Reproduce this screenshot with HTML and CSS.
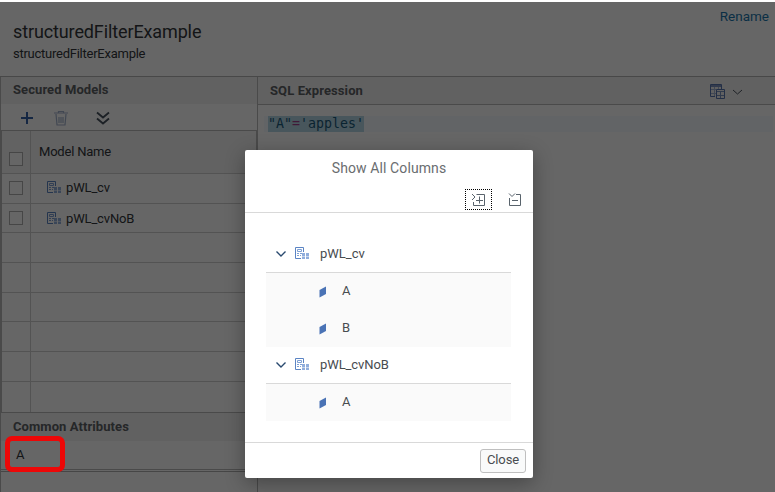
FILE: index.html
```html
<!DOCTYPE html>
<html lang="en">
<head>
<meta charset="utf-8">
<title>structuredFilterExample</title>
<link rel="stylesheet" href="styles.css">
</head>
<body>
<svg width="0" height="0" class="defs">
  <symbol id="model" viewBox="0 0 14 13">
    <path d="M6 11.500H.5V.5h8V5" fill="none" stroke="#5b84c4"/>
    <path d="M2.500 2.500h4v2h-4zM2 6.500h2m1 0h2M2 8.500h2m1 0h1" fill="none" stroke="#7d9fd3"/>
    <path d="M7 6h3v3H7zM11 6h3v3h-3zM7 9.500h3V12H7zM11 9.500h3V12h-3z" fill="#91aedc"/>
  </symbol>
  <symbol id="attr" viewBox="0 0 8 12"><path d="M.5 4 7 .5v7.500L.5 11.500z" fill="#4a73b5"/></symbol>
  <symbol id="chev" viewBox="0 0 12 8"><path d="M1.500 1.500 6 6l4.500-4.500" fill="none" stroke="currentColor" stroke-width="1.400"/></symbol>
</svg>
<div class="app">
  <header class="page-head">
    <div><h1>structuredFilterExample</h1><p>structuredFilterExample</p></div>
    <a class="rename">Rename</a>
  </header>
  <main class="panes">
    <section class="left">
      <h2 class="bar models-title">Secured Models</h2>
      <div class="tools">
        <svg class="plus" width="14" height="14"><path d="M7 1v12M1 7h12" stroke="#3562a8" stroke-width="2"/></svg>
        <svg class="trash" width="14" height="15" fill="none" stroke="#a3b2cd"><path d="M0 2h14M4.500 1.500v-1h5v1M2 3l1 11h8l1-11M5 6v6M7 6v6M9 6v6" stroke-width="1.200"/></svg>
        <svg class="expand" width="14" height="14" fill="none" stroke="#46525e" stroke-width="1.800"><path d="m1 1.500 6 5 6-5M1 7.500l6 5 6-5"/></svg>
      </div>
      <div class="table">
        <div class="row head"><span class="cell"><i class="box"></i></span><span class="name">Model Name</span></div>
        <div class="row"><span class="cell"><i class="box"></i></span><span class="item"><svg width="14" height="13"><use href="#model"/></svg><b class="m1">pWL_cv</b></span></div>
        <div class="row short"><span class="cell"><i class="box"></i></span><span class="item"><svg width="14" height="13"><use href="#model"/></svg><b class="m2">pWL_cvNoB</b></span></div>
        <div class="row"><span class="cell"></span></div>
        <div class="row"><span class="cell"></span></div>
        <div class="row short"><span class="cell"></span></div>
        <div class="row"><span class="cell"></span></div>
        <div class="row"><span class="cell"></span></div>
        <div class="row last"><span class="cell"></span></div>
      </div>
      <h2 class="bar common">Common Attributes</h2>
      <div class="attribute">A</div>
      <div class="rest"></div>
    </section>
    <section class="right">
      <div class="bar sql"><h2>SQL Expression</h2>
        <svg class="grids" width="15" height="16" fill="none" stroke="#5976b0"><path d="M5 12.500H.5V.5h11V5"/><path d="M1 2h10" stroke-width="1.500"/><path d="M4.500 3v9M8.500 3v2M1 5.500h5M1 9.500h5" stroke="#a3b5d4"/><path d="M6.500 5.500h8v9h-8z"/><path d="M7 7.500h7M10.500 8v6M7 11.500h7" stroke="#7b93c0"/></svg>
        <svg class="down" width="11" height="7"><path d="m1 1 4.500 4L10 1" fill="none" stroke="#4c5661"/></svg>
      </div>
      <div class="editor"><code><mark>"A"<em>=</em>'apples'</mark></code></div>
    </section>
  </main>
</div>
<div class="overlay"></div>
<div class="marker"></div>
<div class="dialog" role="dialog">
  <div class="dialog-head">
    <h3>Show All Columns</h3>
    <div class="actions">
      <span class="focus"><svg width="15" height="14" fill="none" stroke="#59636c"><path d="m1 1 3 3-3 3M5.500 1.500h8v11h-11V9M8.500 3.500v7M5 7.500h7"/></svg></span>
      <svg width="14" height="14" fill="none" stroke="#59636c"><path d="m1 .5 3 3 3-3M8 1.500h4.500v11h-11V5M4 7.500h6"/></svg>
    </div>
  </div>
  <div class="tree">
    <div class="parent"><svg class="chev" width="12" height="8"><use href="#chev"/></svg><svg width="14" height="13"><use href="#model"/></svg><span class="m1">pWL_cv</span></div>
    <div class="child"><svg width="8" height="12"><use href="#attr"/></svg><span>A</span></div>
    <div class="child"><svg width="8" height="12"><use href="#attr"/></svg><span>B</span></div>
    <div class="parent"><svg class="chev" width="12" height="8"><use href="#chev"/></svg><svg width="14" height="13"><use href="#model"/></svg><span class="m2">pWL_cvNoB</span></div>
    <div class="child"><svg width="8" height="12"><use href="#attr"/></svg><span>A</span></div>
  </div>
  <footer><button>Close</button></footer>
</div>
</body>
</html>
```
FILE: styles.css
```css
*{box-sizing:border-box;margin:0;padding:0}
body{width:775px;height:492px;overflow:hidden;background:#fff;font:13px Roboto,"Liberation Sans",sans-serif;color:#32363a}
svg{display:block;flex:none}
.defs{position:absolute}
.app{height:492px;padding-top:2px;display:flex;flex-direction:column}
.page-head{height:74px;display:flex;justify-content:space-between;padding:0 6px 0 13px}
h1{font-weight:400;font-size:18px;line-height:22px;margin-top:19px;letter-spacing:-.12px}
.page-head p{line-height:16px;margin-top:3px;letter-spacing:-.25px}
.rename{font-size:13.500px;line-height:16px;margin-top:6px;color:#1b76ac}
.panes{flex:1;display:flex;border-top:1px solid #b4b4b4}
.left{width:258px;border:solid #b8b8b8;border-width:0 1px;display:flex;flex-direction:column}
.right{flex:1}
.bar{background:#f2f2f2;height:27px;line-height:26px;padding-left:12px;font-size:13px;font-weight:700;color:#5d6165;letter-spacing:.08px}
.tools{height:26px;display:flex;align-items:center;padding:2px 0 0 19px}
.trash{margin-left:20px}
.expand{margin-left:28px}
.table{width:256px;border:1px solid #b8b8b8}
.row{height:30px;display:flex;border-bottom:1px solid #cfcfcf}
.row.short{height:29px}
.row.head{height:43px;background:#f4f4f4}
.row.last{height:30px;border:0}
.cell{width:29px;border-right:1px solid #cfcfcf;display:flex;align-items:center;justify-content:center}
.box{width:14px;height:14px;border:1px solid #b0b0b0;background:#fff}
.row:not(.head) .box{margin-bottom:1px}
.head .cell{align-items:flex-end;padding-bottom:7px}
.name{padding-left:8px;line-height:41px;letter-spacing:-.2px}
.item{display:flex;align-items:center;padding:0 0 2px 16px}
.short .item{padding-bottom:0}
.item b{font-weight:400;margin-left:5px;letter-spacing:-.15px}
.common{height:28px;line-height:27px}
.attribute{height:29px;line-height:27px;padding-left:15px;border-bottom:1px solid #b8b8b8}
.rest{margin-top:1px;flex:1;border-top:1px solid #b0b0b0}
.sql{height:28px;border-bottom:1px solid #b8b8b8;display:flex;align-items:center;padding-left:12px}
.sql h2{font-size:13px;line-height:26px;flex:1;letter-spacing:.1px}
.down{margin:3px 32px 0 7px}
.grids{margin:2px 0 0}
.editor{padding:11px 2px 0 6px}
.editor code{display:block;background:#f6faff;height:16px;padding-left:4px;font:13.290px/16px "DejaVu Sans Mono",monospace}
mark{display:inline-block;height:16px;background:#b4d8e7;color:#1a5a7b}
em{font-style:normal;color:#a0408c}
.overlay{position:absolute;inset:2px 0 0;background:rgba(0,0,0,.6)}
.marker{position:absolute;left:5px;top:436px;width:60px;height:36px;border:5px solid #ed0707;border-radius:7px}
.dialog{position:absolute;left:245px;top:150px;width:288px;height:328px;background:#fff;border-radius:2px;box-shadow:0 5px 20px rgba(0,0,0,.32);display:flex;flex-direction:column}
.dialog-head{height:63px;border-bottom:1px solid #d9d9d9}
h3{font-weight:400;font-size:14px;line-height:36px;text-align:center;color:#6a6d70;letter-spacing:.1px}
.actions{display:flex;justify-content:flex-end;align-items:center;padding:3px 11px 0 0;gap:16px}
.focus{width:27px;height:21px;border:1px dotted #000;display:grid;place-items:center}
.tree{flex:1;padding:22px 22px 0 21px;color:#484c50}
.parent{height:38px;border-bottom:1px solid #d9d9d9;display:flex;align-items:center;padding-left:9px}
.chev{color:#29496f;margin-right:8px}
.parent span{margin-left:11px}
.child + .parent{height:37px;padding-bottom:1px}
.m2{letter-spacing:-.1px}
.child{height:37px;display:flex;align-items:center;padding:0 0 2px 53px;background:#fafafa}
.child svg{margin-top:3px}
.child span{margin-left:15px}
footer{height:36px;border-top:1px solid #d9d9d9;display:flex;justify-content:flex-end;padding:6px 7px}
button{width:46px;height:24px;border:1px solid #bfbfbf;border-radius:3px;background:#f9fafa;color:#484c50;font:13px/20px Roboto,sans-serif;letter-spacing:-.15px;padding-bottom:2px}
```
